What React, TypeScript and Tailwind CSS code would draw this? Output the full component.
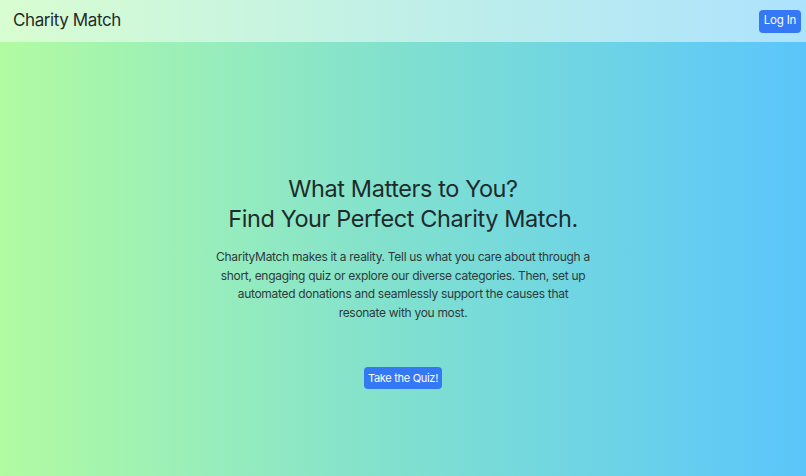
import React from "react";

const lines = [
  "CharityMatch makes it a reality. Tell us what you care about through a",
  "short, engaging quiz or explore our diverse categories. Then, set up",
  "automated donations and seamlessly support the causes that",
  "resonate with you most.",
];

const App: React.FC = () => {
  return (
    <div
      className="min-h-screen w-full bg-gradient-to-r from-[#b1fba1] via-[#80e0cf] to-[#5bc5fb] text-[#1f2b2b]"
      style={{ fontFamily: "Inter, 'Noto Sans', sans-serif" }}
    >
      {/* Top bar */}
      <header className="h-[42px] flex items-center justify-between pl-[13px] pr-[5px] bg-white/50">
        <h1 className="text-[17px] tracking-[-0.4px] text-[#1f2b2b]">Charity Match</h1>
        <button className="h-[23px] w-[42px] flex items-center justify-center rounded-[4px] bg-[#3478f6] text-white text-[11.5px] tracking-[-0.2px]">
          Log In
        </button>
      </header>

      {/* Hero */}
      <main className="flex flex-col items-center pt-[132px] text-center">
        <h2 className="text-[23.5px] leading-[30px] tracking-[-0.4px]">
          What Matters to You?
          <br />
          Find Your Perfect Charity Match.
        </h2>
        <p className="mt-[14px] text-[12px] leading-[18.5px] tracking-[-0.3px] text-[#2e3a3a] whitespace-nowrap">
          {lines.map((l, i) => (
            <React.Fragment key={i}>
              {l}
              {i < lines.length - 1 && <br />}
            </React.Fragment>
          ))}
        </p>
        <button className="mt-[45px] h-[22px] w-[78px] flex items-center justify-center rounded-[4px] bg-[#3478f6] text-white text-[11px] tracking-[-0.3px]">
          Take the Quiz!
        </button>
      </main>
    </div>
  );
};

export default App;
